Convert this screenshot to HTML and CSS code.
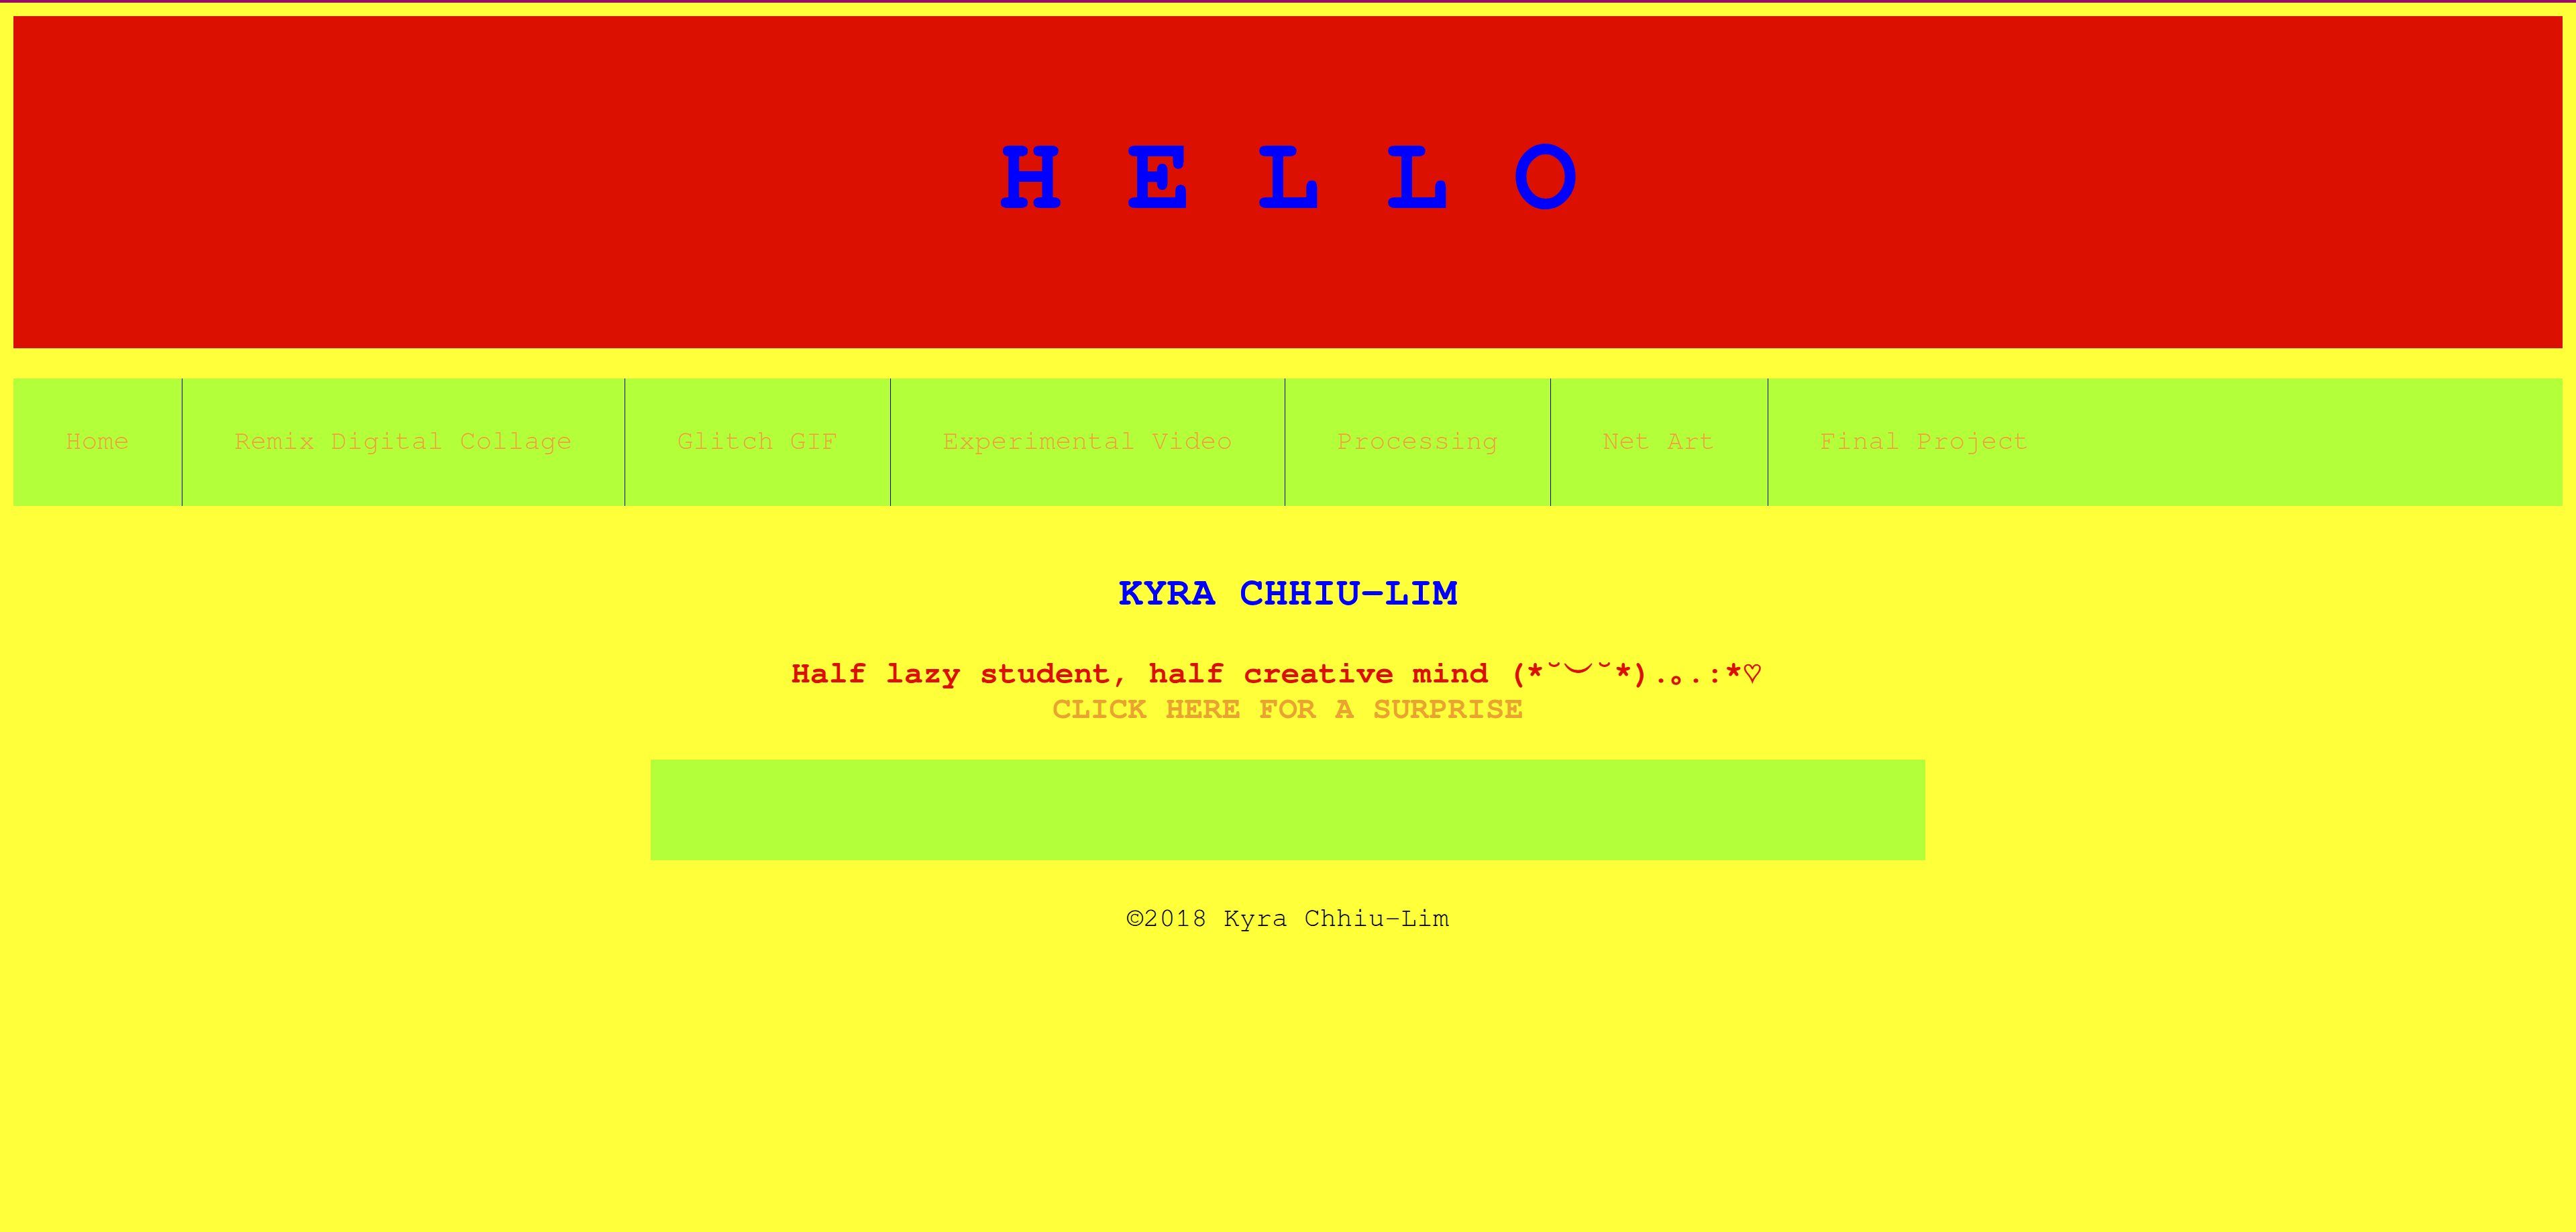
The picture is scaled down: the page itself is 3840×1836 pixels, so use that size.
FILE: index.html
```html
<!DOCTYPE html>
<html lang="en">
<head>
<meta charset="utf-8">
<title>Kyra Chhiu-Lim</title>
<link rel="stylesheet" href="styles.css">
</head>
<body>
<header class="banner">
  <h1 class="banner-title">H E L L O</h1>
</header>
<nav class="menu">
  <ul class="menu-list">
    <li class="menu-item"><a class="menu-link" href="#">Home</a></li>
    <li class="menu-item"><a class="menu-link" href="#">Remix Digital Collage</a></li>
    <li class="menu-item"><a class="menu-link" href="#">Glitch GIF</a></li>
    <li class="menu-item"><a class="menu-link" href="#">Experimental Video</a></li>
    <li class="menu-item"><a class="menu-link" href="#">Processing</a></li>
    <li class="menu-item"><a class="menu-link" href="#">Net Art</a></li>
    <li class="menu-item"><a class="menu-link" href="#">Final Project</a></li>
  </ul>
</nav>
<main class="content">
  <h2 class="name">KYRA CHHIU-LIM</h2>
  <h3 class="tagline"><span class="tagline-text">Half lazy student, half creative mind (*˘︶˘*).｡.:*♡</span><br><a class="surprise" href="#">CLICK HERE FOR A SURPRISE</a></h3>
  <div class="box"></div>
  <footer class="footer">©2018 Kyra Chhiu-Lim</footer>
</main>
</body>
</html>
```
FILE: styles.css
```css
html {
  border-top: 4px solid #990b68;
  background: #ffff3a;
}
body {
  margin: 20px;
  font-family: "Nimbus Mono PS", "Nimbus Mono L", FreeMono, Courier, monospace;
  background: #ffff3a;
  min-height: 1772px;
}
.banner {
  height: 495px;
  box-sizing: border-box;
  padding-bottom: 20px;
  background: #dc1000;
  display: flex;
  align-items: center;
  justify-content: center;
}
.banner-title {
  margin: 0;
  font-size: 160px;
  font-weight: bold;
  color: #0000ff;
  white-space: pre;
  line-height: normal;
}
.menu {
  margin-top: 45px;
  background: #b3ff3a;
}
.menu-list {
  list-style: none;
  margin: 0;
  padding: 0;
  display: flex;
  height: 190px;
}
.menu-item {
  display: flex;
  align-items: center;
  padding: 0 77.5px 4px;
}
.menu-item + .menu-item {
  border-left: 1px solid #000;
}
.menu-link {
  font-size: 40px;
  color: #eea33a;
  text-decoration: none;
}
.content {
  display: flex;
  flex-direction: column;
  align-items: center;
  text-align: center;
}
.name {
  margin: 99px 0 0;
  font-size: 60px;
  font-weight: bold;
  color: #0000ff;
  line-height: normal;
}
.tagline {
  margin: 57px 0 0;
  font-size: 46.8px;
  font-weight: bold;
  color: #dc1000;
  line-height: normal;
}
.tagline-text {
  padding-right: 34px;
}
.surprise {
  color: #eba330;
  text-decoration: none;
}
.box {
  margin-top: 53px;
  width: 1900px;
  height: 150px;
  background: #b3ff3a;
}
.footer {
  margin-top: 66px;
  font-size: 40px;
  color: #000;
  line-height: normal;
}
```
